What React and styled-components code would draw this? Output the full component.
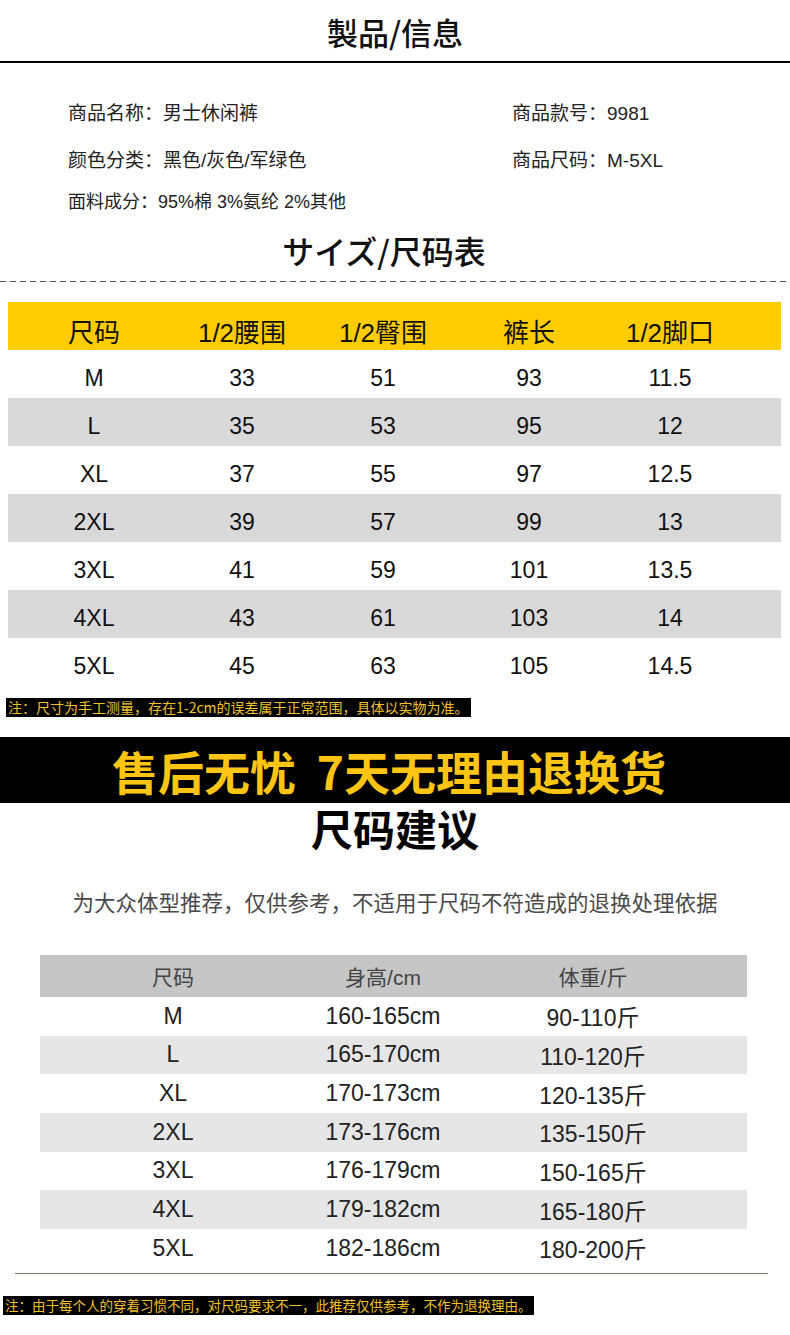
import React from "react";
import styled, { createGlobalStyle } from "styled-components";

const Global = createGlobalStyle`
  html, body { margin: 0; padding: 0; background: #fff; }
  body { font-family: "Liberation Sans", "Noto Sans CJK SC", sans-serif; color: #111; }
`;

const Page = styled.div`
  width: 790px;
  display: flex;
  flex-direction: column;
  background: #fff;
`;

const TopTitle = styled.div`
  height: 59px;
  padding-top: 2px;
  display: flex;
  align-items: center;
  justify-content: center;
  border-bottom: 2px solid #000;
  font-size: 31px;
  font-weight: 500;
  color: #111;
  font-family: "Noto Sans CJK SC", sans-serif;
`;

const InfoBlock = styled.div`
  padding: 36px 0 0 68px;
  display: flex;
  flex-direction: column;
`;

const InfoRow = styled.div`
  height: ${(p) => p.$h}px;
  display: grid;
  grid-template-columns: 444px 1fr;
  align-items: start;
`;

const InfoText = styled.div`
  height: 30px;
  line-height: 30px;
  font-size: ${(p) => p.$size || 19}px;
  color: #222;
  white-space: nowrap;
`;

const SectionTitle = styled.div`
  margin-top: 13px;
  height: 40px;
  line-height: 40px;
  padding-right: 22px;
  text-align: center;
  font-size: 32px;
  font-weight: 500;
  color: #111;
  font-family: "Noto Sans CJK SC", sans-serif;
`;

const Dashed = styled.div`
  margin-top: 11px;
  height: 1px;
  background: repeating-linear-gradient(to right, #555 0 6px, transparent 6px 10px);
`;

const SizeTable = styled.div`
  margin: 20px 9px 0 8px;
  display: flex;
  flex-direction: column;
`;

const SizeRow = styled.div`
  height: 48px;
  box-sizing: border-box;
  padding-top: ${(p) => (p.$head ? 8 : 9)}px;
  display: grid;
  grid-template-columns: 172px 124px 158px 134px 148px;
  align-items: center;
  background: ${(p) => (p.$head ? "#FFCC00" : p.$alt ? "#D9D9D9" : "#fff")};
`;

const SizeCell = styled.div`
  text-align: center;
  white-space: nowrap;
  font-size: ${(p) => (p.$head ? 26 : 23)}px;
  color: #111;
`;

const Note = styled.div`
  align-self: flex-start;
  margin: ${(p) => p.$m};
  height: 19px;
  line-height: 19px;
  padding: 0 2px;
  background: #000;
  color: #F2C02A;
  font-size: ${(p) => p.$size || 14}px;
  white-space: nowrap;
  font-family: "Noto Sans CJK SC", sans-serif;
`;

const Banner = styled.div`
  margin-top: 20px;
  height: 66px;
  background: #000;
  display: flex;
  align-items: center;
  justify-content: center;
  padding-right: 12px;
  color: #FFC514;
  font-size: 46px;
  font-weight: 700;
  font-family: "Noto Sans CJK SC", sans-serif;
  white-space: pre;
`;

const BigTitle = styled.div`
  height: 50px;
  line-height: 50px;
  text-align: center;
  font-size: 42px;
  font-weight: 700;
  color: #000;
  font-family: "Noto Sans CJK SC", sans-serif;
`;

const Sub = styled.div`
  margin-top: 34px;
  height: 30px;
  line-height: 30px;
  text-align: center;
  font-size: 21.5px;
  color: #4a4a4a;
  font-family: "Noto Sans CJK SC", sans-serif;
`;

const RecTable = styled.div`
  margin: 38px 43px 0 40px;
  display: flex;
  flex-direction: column;
`;

const RecRow = styled.div`
  height: ${(p) => (p.$head ? "42px" : "38.67px")};
  padding-left: 28px;
  display: grid;
  grid-template-columns: 210px 210px 210px;
  align-items: center;
  background: ${(p) => (p.$head ? "#C6C6C6" : p.$alt ? "#E6E6E6" : "#fff")};
`;

const RecCell = styled.div`
  text-align: center;
  white-space: nowrap;
  font-size: ${(p) => (p.$head ? 21 : 23)}px;
  color: ${(p) => (p.$head ? "#444" : "#222")};
`;

const BottomLine = styled.div`
  margin: 5px 22px 0 15px;
  height: 1px;
  background: #7d7466;
`;

const sizes = [
  ["M", "33", "51", "93", "11.5"],
  ["L", "35", "53", "95", "12"],
  ["XL", "37", "55", "97", "12.5"],
  ["2XL", "39", "57", "99", "13"],
  ["3XL", "41", "59", "101", "13.5"],
  ["4XL", "43", "61", "103", "14"],
  ["5XL", "45", "63", "105", "14.5"],
];

const rec = [
  ["M", "160-165cm", "90-110斤"],
  ["L", "165-170cm", "110-120斤"],
  ["XL", "170-173cm", "120-135斤"],
  ["2XL", "173-176cm", "135-150斤"],
  ["3XL", "176-179cm", "150-165斤"],
  ["4XL", "179-182cm", "165-180斤"],
  ["5XL", "182-186cm", "180-200斤"],
];

export default function App() {
  return (
    <Page>
      <Global />
      <TopTitle>製品/信息</TopTitle>
      <InfoBlock>
        <InfoRow $h={47}>
          <InfoText>商品名称：男士休闲裤</InfoText>
          <InfoText>商品款号：9981</InfoText>
        </InfoRow>
        <InfoRow $h={41}>
          <InfoText>颜色分类：黑色/灰色/军绿色</InfoText>
          <InfoText>商品尺码：M-5XL</InfoText>
        </InfoRow>
        <InfoRow $h={30}>
          <InfoText $size={18}>面料成分：95%棉 3%氨纶 2%其他</InfoText>
        </InfoRow>
      </InfoBlock>
      <SectionTitle>サイズ/尺码表</SectionTitle>
      <Dashed />
      <SizeTable>
        <SizeRow $head>
          {["尺码", "1/2腰围", "1/2臀围", "裤长", "1/2脚口"].map((t) => (
            <SizeCell key={t} $head>{t}</SizeCell>
          ))}
        </SizeRow>
        {sizes.map((r, i) => (
          <SizeRow key={r[0]} $alt={i % 2 === 1}>
            {r.map((c, j) => (
              <SizeCell key={j}>{c}</SizeCell>
            ))}
          </SizeRow>
        ))}
      </SizeTable>
      <Note $m="12px 0 0 6px">注：尺寸为手工测量，存在1-2cm的误差属于正常范围，具体以实物为准。</Note>
      <Banner>{"售后无忧  7天无理由退换货"}</Banner>
      <BigTitle>尺码建议</BigTitle>
      <Sub>为大众体型推荐，仅供参考，不适用于尺码不符造成的退换处理依据</Sub>
      <RecTable>
        <RecRow $head>
          <RecCell $head>尺码</RecCell>
          <RecCell $head>身高/cm</RecCell>
          <RecCell $head>体重/斤</RecCell>
        </RecRow>
        {rec.map((r, i) => (
          <RecRow key={r[0]} $alt={i % 2 === 1}>
            {r.map((c, j) => (
              <RecCell key={j}>{c}</RecCell>
            ))}
          </RecRow>
        ))}
      </RecTable>
      <BottomLine />
      <Note $m="22px 0 20px 3px" $size={13.5}>注：由于每个人的穿着习惯不同，对尺码要求不一，此推荐仅供参考，不作为退换理由。</Note>
    </Page>
  );
}
